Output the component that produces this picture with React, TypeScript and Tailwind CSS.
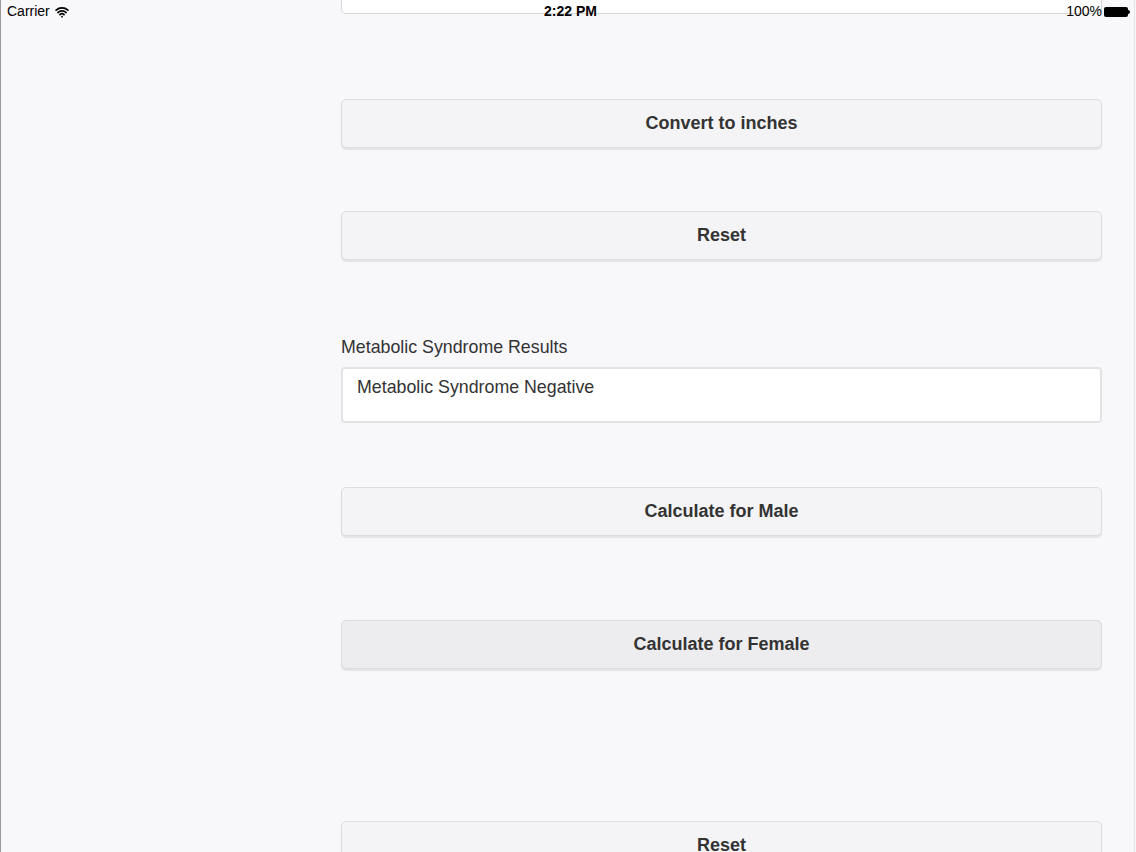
import { Wifi } from 'lucide-react';

const font = { fontFamily: '"Liberation Sans", Arial, sans-serif' };

const ActionButton = ({ label, pressed }: { label: string; pressed?: boolean }) => (
  <button
    className={`h-[49px] w-full rounded-[5px] border border-[#dcdbdf] text-[18px] font-bold text-[#333333] shadow-[0_2px_1px_rgba(0,0,0,0.08)] ${
      pressed ? 'bg-[#edecef]' : 'bg-[#f4f3f6]'
    }`}
  >
    {label}
  </button>
);

export default function App() {
  return (
    <div
      className="relative h-[852px] w-[1136px] overflow-hidden border-l border-[#9a9a9a] bg-[#f8f7fa] text-[#333333]"
      style={font}
    >
      {/* status bar */}
      <div className="absolute inset-x-0 top-0 z-10 flex h-[23px] items-center justify-between pl-[6px] pr-[6px] text-[14px] text-black">
        <div className="flex items-center gap-[5px]">
          <span>Carrier</span>
          <Wifi className="h-[14px] w-[14px]" strokeWidth={3} />
        </div>
        <span className="absolute left-[543px] font-bold">2:22 PM</span>
        <div className="flex items-center gap-[2px]">
          <span>100%</span>
          <div className="flex items-center">
            <div className="h-[10px] w-[24px] rounded-[2px] bg-black" />
            <div className="h-[4px] w-[2px] rounded-r bg-black" />
          </div>
        </div>
      </div>

      <div className="ml-[340px] flex w-[761px] flex-col">
        <div className="mt-[-31px] h-[45px] rounded-[5px] border border-[#d8d8d8] bg-white" />

        <div className="mt-[85px]">
          <ActionButton label="Convert to inches" />
        </div>
        <div className="mt-[63px]">
          <ActionButton label="Reset" />
        </div>

        <div className="mt-[77px] text-[17.8px] leading-[20px] text-[#333333]">Metabolic Syndrome Results</div>
        <div className="mt-[10px] h-[56px] rounded-[4px] border-2 border-[#e3e3e5] bg-white px-[14px] pt-[5px] text-[17.8px] text-[#333333]">
          Metabolic Syndrome Negative
        </div>

        <div className="mt-[64px]">
          <ActionButton label="Calculate for Male" />
        </div>
        <div className="mt-[84px]">
          <ActionButton label="Calculate for Female" pressed />
        </div>
        <div className="mt-[152px]">
          <ActionButton label="Reset" />
        </div>
      </div>

      <div className="absolute right-[1px] top-0 h-full w-px bg-[#e4e4e6]" />
    </div>
  );
}
